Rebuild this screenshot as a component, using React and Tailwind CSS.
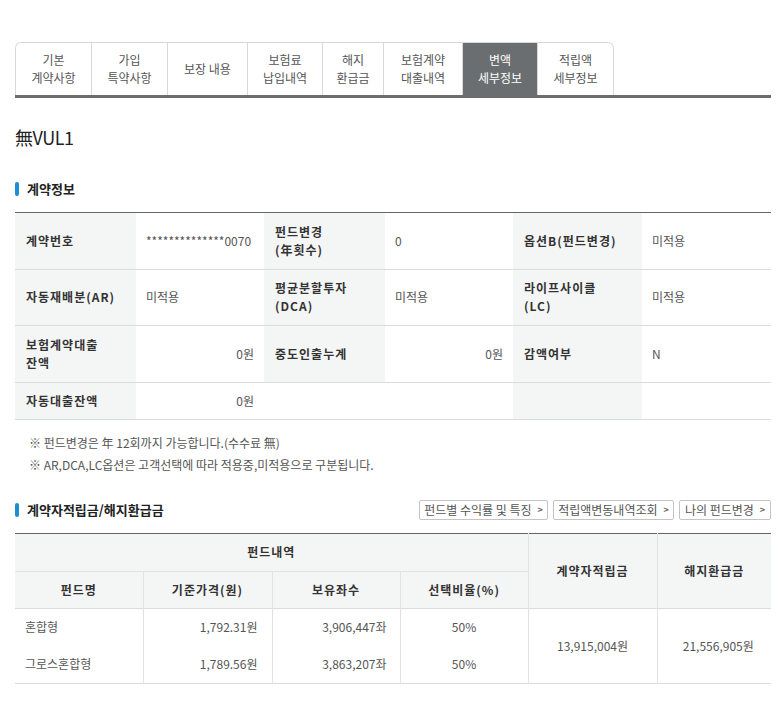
import React from "react";

const font = { fontFamily: '"Noto Sans CJK KR", "Noto Sans", sans-serif' };

const tabs = [
  ["기본", "계약사항"],
  ["가입", "특약사항"],
  ["보장 내용"],
  ["보험료", "납입내역"],
  ["해지", "환급금"],
  ["보험계약", "대출내역"],
  ["변액", "세부정보"],
  ["적립액", "세부정보"],
];
const tabWidths = ["w-[77px]", "w-[76px]", "w-[80px]", "w-[75px]", "w-[61px]", "w-[79px]", "w-[75px]", "w-[76px]"];

function Tabs() {
  return (
    <div className="border-b-[3px] border-[#6b6d6e]">
      <div className="flex h-[53px]">
        {tabs.map((t, i) => {
          const active = i === 6;
          return (
            <div
              key={i}
              className={`${tabWidths[i]} flex flex-col items-center justify-center text-[12px] leading-[18px] border-t border-r border-[#d8d8d8] ${
                i === 0 ? "border-l rounded-tl-[6px]" : ""
              } ${i === tabs.length - 1 ? "rounded-tr-[6px]" : ""} ${
                active ? "bg-[#6b6e70] text-white border-[#6b6e70]" : "bg-white text-[#555]"
              }`}
            >
              {t.map((l, j) => (
                <span key={j}>{l}</span>
              ))}
            </div>
          );
        })}
      </div>
    </div>
  );
}

function SectionTitle({ children }) {
  return (
    <div className="flex items-center gap-[8px]">
      <span className="w-[4px] h-[14px] rounded-[2px] bg-[#1a8fd1]" />
      <h3 className="text-[13px] font-bold text-[#222]">{children}</h3>
    </div>
  );
}

const th1 = "bg-[#f4f5f5] text-left align-middle pl-[11px] pr-[6px] font-bold text-[#333] text-[12px] leading-[18px] tracking-[1px]";
const td1 = "align-middle px-[10px] text-[#555] text-[12px]";

function InfoTable() {
  return (
    <table className="w-full table-fixed border-collapse border-t border-[#666] mt-[13px]">
      <colgroup>
        <col className="w-[121px]" />
        <col className="w-[128px]" />
        <col className="w-[121px]" />
        <col className="w-[128px]" />
        <col className="w-[129px]" />
        <col />
      </colgroup>
      <tbody>
        <tr className="h-[57px] border-b border-[#dcdcdc]">
          <th className={th1}>계약번호</th>
          <td className={td1}>**************0070</td>
          <th className={th1}>
            펀드변경
            <br />
            (年횟수)
          </th>
          <td className={td1}>0</td>
          <th className={th1}>옵션B(펀드변경)</th>
          <td className={td1}>미적용</td>
        </tr>
        <tr className="h-[56px] border-b border-[#dcdcdc]">
          <th className={th1}>자동재배분(AR)</th>
          <td className={td1}>미적용</td>
          <th className={th1}>
            평균분할투자
            <br />
            (DCA)
          </th>
          <td className={td1}>미적용</td>
          <th className={th1}>
            라이프사이클
            <br />
            (LC)
          </th>
          <td className={td1}>미적용</td>
        </tr>
        <tr className="h-[57px] border-b border-[#dcdcdc]">
          <th className={th1}>
            보험계약대출
            <br />
            잔액
          </th>
          <td className={`${td1} text-right`}>0원</td>
          <th className={th1}>중도인출누계</th>
          <td className={`${td1} text-right`}>0원</td>
          <th className={th1}>감액여부</th>
          <td className={td1}>N</td>
        </tr>
        <tr className="h-[37px] border-b border-[#dcdcdc]">
          <th className={th1}>자동대출잔액</th>
          <td className={`${td1} text-right`}>0원</td>
          <td className={td1}></td>
          <td className={td1}></td>
          <th className={th1}></th>
          <td className={td1}></td>
        </tr>
      </tbody>
    </table>
  );
}

function LinkButton({ children, w }) {
  return (
    <button
      className={`${w} h-[20px] flex items-center justify-center gap-[6px] border border-[#c4c4c4] rounded-[2px] bg-white text-[12px] text-[#555] leading-none`}
    >
      <span>{children}</span>
      <span className="text-[9px] font-bold text-[#666]">&gt;</span>
    </button>
  );
}

const th2 = "bg-[#f4f5f5] font-bold text-[#333] text-[12px] tracking-[1px] text-center align-middle";
const td2 = "text-[12px] text-[#555] align-middle px-[10px]";

function FundTable() {
  return (
    <table className="w-full table-fixed border-collapse border-t border-[#666] mt-[13px]">
      <colgroup>
        <col className="w-[128px]" />
        <col className="w-[129px]" />
        <col className="w-[128px]" />
        <col className="w-[128px]" />
        <col className="w-[129px]" />
        <col />
      </colgroup>
      <tbody>
        <tr className="h-[38px]">
          <th colSpan={4} className={`${th2} border-b border-[#e2e2e2]`}>
            펀드내역
          </th>
          <th rowSpan={2} className={`${th2} border-l border-[#e2e2e2]`}>
            계약자적립금
          </th>
          <th rowSpan={2} className={`${th2} border-l border-[#e2e2e2]`}>
            해지환급금
          </th>
        </tr>
        <tr className="h-[37px] border-b border-[#dcdcdc]">
          <th className={th2}>펀드명</th>
          <th className={`${th2} border-l border-[#e2e2e2]`}>기준가격(원)</th>
          <th className={`${th2} border-l border-[#e2e2e2]`}>보유좌수</th>
          <th className={`${th2} border-l border-[#e2e2e2]`}>선택비율(%)</th>
        </tr>
        <tr className="h-[37px]">
          <td className={td2}>혼합형</td>
          <td className={`${td2} text-right border-l border-[#e2e2e2] pr-[14px]`}>1,792.31원</td>
          <td className={`${td2} text-right border-l border-[#e2e2e2] pr-[13px]`}>3,906,447좌</td>
          <td className={`${td2} text-center border-l border-[#e2e2e2]`}>50%</td>
          <td rowSpan={2} className={`${td2} text-center border-l border-[#e2e2e2]`}>
            13,915,004원
          </td>
          <td rowSpan={2} className={`${td2} text-center border-l border-[#e2e2e2] pl-[18px]`}>
            21,556,905원
          </td>
        </tr>
        <tr className="h-[38px] border-b border-[#dcdcdc]">
          <td className={td2}>그로스혼합형</td>
          <td className={`${td2} text-right border-l border-[#e2e2e2] pr-[14px]`}>1,789.56원</td>
          <td className={`${td2} text-right border-l border-[#e2e2e2] pr-[13px]`}>3,863,207좌</td>
          <td className={`${td2} text-center border-l border-[#e2e2e2]`}>50%</td>
        </tr>
      </tbody>
    </table>
  );
}

export default function App() {
  return (
    <div className="w-[784px] h-[712px] overflow-hidden bg-white pt-[42px] pl-[15px]" style={font}>
      <div className="w-[756px]">
        <Tabs />

        <h2 className="mt-[27px] text-[18px] leading-[24px] text-[#222] tracking-[-0.5px]">無VUL1</h2>

        <div className="mt-[30px]">
          <SectionTitle>계약정보</SectionTitle>
        </div>
        <InfoTable />

        <div className="mt-[12px] pl-[14px] text-[12px] leading-[22px] text-[#555]">
          <p>※ 펀드변경은 年 12회까지 가능합니다.(수수료 無)</p>
          <p>※ AR,DCA,LC옵션은 고객선택에 따라 적용중,미적용으로 구분됩니다.</p>
        </div>

        <div className="mt-[24px] flex items-center justify-between">
          <SectionTitle>계약자적립금/해지환급금</SectionTitle>
          <div className="flex gap-[5px]">
            <LinkButton w="w-[129px]">펀드별 수익률 및 특징</LinkButton>
            <LinkButton w="w-[121px]">적립액변동내역조회</LinkButton>
            <LinkButton w="w-[92px]">나의 펀드변경</LinkButton>
          </div>
        </div>
        <FundTable />
      </div>
    </div>
  );
}
